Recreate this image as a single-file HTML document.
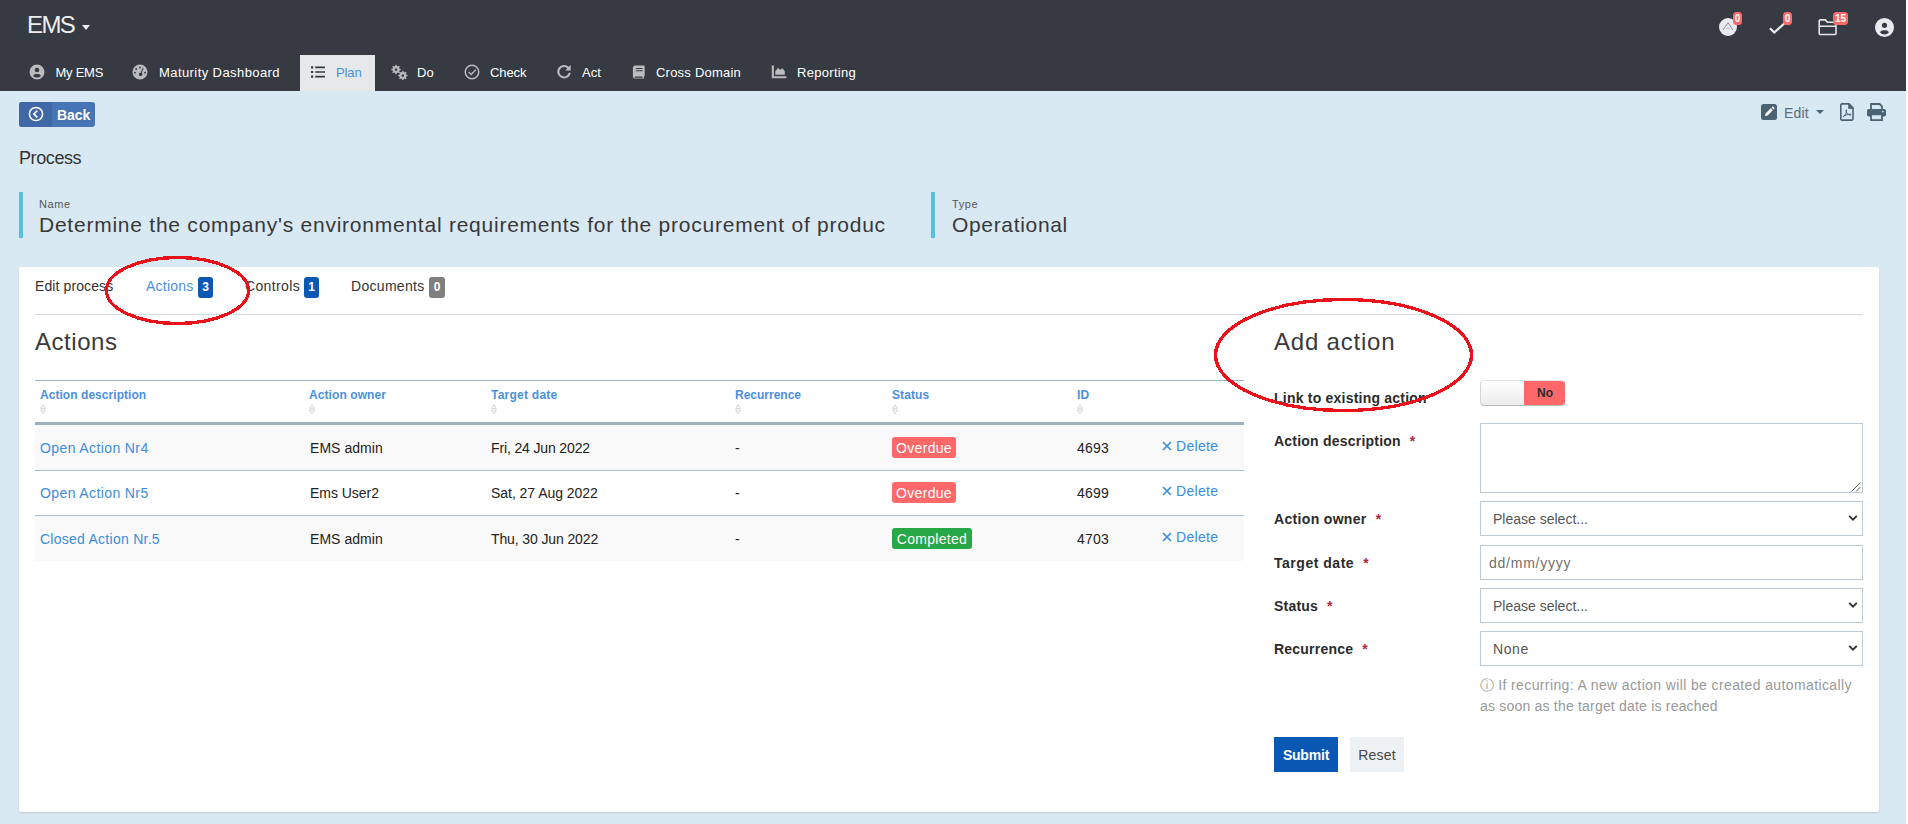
<!DOCTYPE html>
<html lang="en">
<head>
<meta charset="utf-8">
<title>EMS - Process</title>
<style>
*{box-sizing:border-box}
html,body{margin:0;padding:0}
body{width:1908px;height:824px;overflow:hidden;background:#fff;font-family:"Liberation Sans","DejaVu Sans",sans-serif;font-size:14px;color:#333;position:relative}
#page{position:absolute;left:0;top:0;width:1906px;height:824px;background:#d9e9f4;overflow:hidden}
.abs{position:absolute}
/* header */
#hdr{position:absolute;left:0;top:0;width:1906px;height:91px;background:#353a43}
#brand{position:absolute;left:27px;top:10px;font-size:24px;line-height:30px;color:#eceeef;letter-spacing:-1.6px;white-space:nowrap}
#brand-caret{position:absolute;left:82px;top:25px;width:0;height:0;border-left:4.5px solid transparent;border-right:4.5px solid transparent;border-top:5px solid #eceeef}
.nav{position:absolute;top:55px;height:36px;white-space:nowrap;font-size:13px;line-height:35px;color:#fff}
.nav svg{position:absolute;top:9px;left:0;width:16px;height:16px;fill:#b9bbbd}
.nav span{position:absolute;top:0;}
#nav-plan{background:#e6e7e8;left:300px;width:75px;color:#4a90d9}
#nav-plan svg{fill:#353a43}
/* top right */
.tbadge{position:absolute;top:12px;height:13px;border-radius:3.5px;background:#ff6868;color:#fff;font-weight:700;font-size:10px;line-height:14px;text-align:center}
/* back */
#back{position:absolute;left:19px;top:102px;width:76px;height:25px;border-radius:3px;background:#4774b4;overflow:hidden;color:#fff;font-weight:700;font-size:14px;line-height:25px}
#back i{position:absolute;left:0;top:0;width:33px;height:25px;background:#4168a6}
#back span{position:absolute;left:38px;top:1px;letter-spacing:-.1px}
#back svg{position:absolute;left:8.500px;top:4px;width:16px;height:16px}
#ptitle{position:absolute;left:19px;top:145px;font-size:18px;line-height:26px;color:#333;letter-spacing:-.4px}
.fld{position:absolute;top:192px;height:46px;border-left:4px solid #5bc0de;padding-left:16px;white-space:nowrap}
.fld small{position:absolute;left:16px;top:5px;font-size:11px;line-height:14px;color:#555;letter-spacing:.6px}
.fld b{position:absolute;left:16px;top:19px;font-weight:400;font-size:21px;line-height:28px;color:#383838;letter-spacing:.76px}
/* card */
#card{position:absolute;left:19px;top:267px;width:1860px;height:545px;background:#fff;border-radius:2px;box-shadow:0 1px 2px rgba(0,0,0,.12)}
.tab{position:absolute;top:276px;line-height:21px;font-size:14px;color:#333;white-space:nowrap}
.bdg{position:absolute;top:277px;width:15px;height:21px;border-radius:3px;background:#0a58b4;color:#fff;font-size:12px;font-weight:700;line-height:21px;text-align:center}
.hr{position:absolute;height:1px;background:#d5d9dc}
h2{position:absolute;margin:0;font-weight:400;font-size:24px;line-height:32px;color:#3a3a3a;white-space:nowrap}
/* table */
#tbl{position:absolute;left:35px;top:380px;width:1209px}
.th{position:absolute;top:388px;font-size:12px;line-height:14px;font-weight:700;color:#4a90e2;white-space:nowrap}
.srt{position:absolute;top:404px;width:6px;height:10px}
.row{position:absolute;left:35px;width:1209px;height:45px}
.row div{position:absolute;top:0;line-height:45px;white-space:nowrap;letter-spacing:.3px;color:#222}
.row a{color:#3b8de0;text-decoration:none}
.st{position:absolute;top:12px;height:21px;border-radius:3px;color:#fff;font-size:14px;line-height:22px;text-align:center;letter-spacing:.3px}
/* form */
.lbl{position:absolute;left:1274px;font-weight:700;font-size:14px;line-height:20px;color:#2b2b2b;white-space:nowrap;letter-spacing:.22px}
.lbl em{font-style:normal;color:#b0273f;margin-left:9px}
.inp{position:absolute;left:1480px;width:383px;height:35px;border:1px solid #bccbd6;background:#fff;font-size:14px;line-height:33px;color:#555;padding-left:12px;letter-spacing:0;white-space:nowrap}
.inp svg{position:absolute;right:4px;top:12px;width:10px;height:8px}
.btn{position:absolute;top:737px;height:35px;line-height:36px;text-align:center;font-size:14px}
</style>
</head>
<body>
<div id="page">

<!-- HEADER -->
<div id="hdr">
  <div id="brand">EMS</div><div id="brand-caret"></div>

  <!-- nav -->
  <div class="nav" style="left:30px;width:90px">
    <svg viewBox="0 0 16 16" style="left:-.7px;top:8.6px"><path fill-rule="evenodd" d="M8 .5a7.5 7.5 0 1 0 0 15a7.5 7.5 0 0 0 0-15zM8 3.7a2.3 2.3 0 1 1 0 4.6a2.3 2.3 0 0 1 0-4.6zM8 13.6a5.2 5.2 0 0 1-3.8-1.700c.4-1.200 1.600-1.900 2.700-1.900h2.200c1.100 0 2.300.7 2.700 1.900A5.200 5.200 0 0 1 8 13.600z"/></svg>
    <span style="left:25.5px;letter-spacing:-.25px">My EMS</span>
  </div>
  <div class="nav" style="left:133px;width:160px">
    <svg viewBox="0 0 16 16" style="left:-.7px;top:8.6px"><path fill-rule="evenodd" d="M8 .5a7.500 7.500 0 1 0 0 15a7.500 7.500 0 0 0 0-15zM8 2.600a.9.900 0 1 1 0 1.800a.9.900 0 0 1 0-1.800zM4.200 4.100a.9.900 0 1 1 0 1.800a.9.900 0 0 1 0-1.800zM3 7.800a.9.900 0 1 1 0 1.800a.9.900 0 0 1 0-1.800zM13 7.800a.9.900 0 1 1 0 1.800a.9.900 0 0 1 0-1.800zM10.700 3.700l.900.400l-1.900 5a1.700 1.700 0 1 1-1-.400z"/></svg>
    <span style="left:26px;letter-spacing:.42px">Maturity Dashboard</span>
  </div>
  <div class="nav" id="nav-plan">
    <svg viewBox="0 0 16 16" style="left:10px"><path d="M1 2.300h2.200v2.200H1zM1 6.900h2.200v2.200H1zM1 11.500h2.200v2.200H1zM5.200 2.600H15v1.600H5.200zM5.200 7.200H15v1.600H5.200zM5.200 11.800H15v1.600H5.200z"/></svg>
    <span style="left:36px;letter-spacing:-.1px">Plan</span>
  </div>
  <div class="nav" style="left:390px;width:60px">
    <svg viewBox="0 0 18 16" style="width:18px"><g fill-rule="evenodd"><path d="M5.500 .8l1.100 0l.3 1.300l1 .4l1.100-.7l.8.800l-.7 1.100l.4 1l1.300.3v1.100l-1.300.3l-.4 1l.7 1.100l-.8.800l-1.100-.7l-1 .4l-.3 1.300H5.500l-.3-1.300l-1-.4l-1.100.7l-.8-.8l.7-1.100l-.4-1L1.300 6.100V5l1.300-.3l.4-1l-.7-1.100l.8-.8l1.100.7l1-.4zM6 4.300a1.300 1.300 0 1 0 .01 0z"/><path d="M12.300 6.800l1.100 0l.3 1.300l1 .4l1.100-.7l.8.800l-.7 1.100l.4 1l1.300.3v1.100l-1.300.3l-.4 1l.7 1.100l-.8.800l-1.100-.7l-1 .4l-.3 1.300h-1.100l-.3-1.300l-1-.4l-1.100.7l-.8-.8l.7-1.100l-.4-1l-1.300-.3V11l1.300-.3l.4-1l-.7-1.100l.8-.8l1.100.7l1-.4zM12.800 10.300a1.300 1.300 0 1 0 .01 0z"/></g></svg>
    <span style="left:27px;letter-spacing:.2px">Do</span>
  </div>
  <div class="nav" style="left:464px;width:80px">
    <svg viewBox="0 0 16 16"><path fill-rule="evenodd" d="M8 .5a7.500 7.500 0 1 0 0 15a7.500 7.500 0 0 0 0-15zM8 2a6 6 0 1 1 0 12a6 6 0 0 1 0-12zM11.300 5.300l1 1l-5.100 5.100l-3-3l1-1l2 2z"/></svg>
    <span style="left:26px;letter-spacing:-.1px">Check</span>
  </div>
  <div class="nav" style="left:556px;width:60px">
    <svg viewBox="0 0 16 16"><path d="M14.700 .9v5.600H9.100l2.200-2.200A4.700 4.700 0 1 0 12.700 8.800h2.100A6.800 6.800 0 1 1 12.800 2.800z"/></svg>
    <span style="left:26px">Act</span>
  </div>
  <div class="nav" style="left:631px;width:125px">
    <svg viewBox="0 0 16 16" style="width:14px;left:1px"><path fill-rule="evenodd" d="M3.500 .5h10a1 1 0 0 1 1 1v10.500a1 1 0 0 1-1 1v1.500h.5v1H3.500A2.500 2.500 0 0 1 1 13V3A2.500 2.500 0 0 1 3.500 .5zM4.500 3.500v1.200h7.500V3.500zM4.500 6v1.200h7.500V6zM3.700 13a.75.750 0 0 0 0 1.500h8.300V13z"/></svg>
    <span style="left:25px;letter-spacing:.22px">Cross Domain</span>
  </div>
  <div class="nav" style="left:771px;width:100px">
    <svg viewBox="0 0 16 16"><path d="M.8 1.500h2.100v10.700H15.400v2.100H.8zM4.300 10.800V7.200l2.600-3.200l2.400 1.800l2.100-1.600l2.400 3v3.600z"/></svg>
    <span style="left:26px;letter-spacing:.3px">Reporting</span>
  </div>

  <!-- top right icons -->
  <svg class="abs" style="left:1719px;top:18px" width="18" height="18" viewBox="0 0 18 18"><circle cx="9" cy="9" r="9" fill="#e9ecef"/><path d="M3.900 12L9.200 4.700L13.800 12" fill="none" stroke="#8d9399" stroke-width="1"/><path d="M7 10.300h4" stroke="#c4c7ca" stroke-width="1.200"/></svg>
  <div class="tbadge" style="left:1733px;width:9px">0</div>
  <svg class="abs" style="left:1769px;top:22px" width="17" height="12" viewBox="0 0 17 12"><path d="M1 6.200l4.300 4.300L15.800 1" fill="none" stroke="#e9ecef" stroke-width="2.200"/></svg>
  <div class="tbadge" style="left:1783px;width:9px">0</div>
  <svg class="abs" style="left:1818px;top:18px" width="20" height="18" viewBox="0 0 20 18"><path d="M2.200 1.900h5.100l2.200 2.400H17a1 1 0 0 1 1 1v10.200a1 1 0 0 1-1 1H2.200a1 1 0 0 1-1-1V2.900a1 1 0 0 1 1-1zM1.500 8.200h16.500" fill="none" stroke="#e4e7ea" stroke-width="1.600"/></svg>
  <div class="tbadge" style="left:1833px;width:15px">15</div>
  <svg class="abs" style="left:1875px;top:18px" width="19" height="19" viewBox="0 0 16 16"><path fill="#e9ecef" fill-rule="evenodd" d="M8 0a8 8 0 1 0 0 16a8 8 0 0 0 0-16zM8 4a2.200 2.200 0 1 1 0 4.400a2.200 2.200 0 0 1 0-4.400zM8 13.800a5 5 0 0 1-3.700-1.600c.4-1.200 1.500-1.900 2.600-1.900h2.200c1.100 0 2.200.7 2.600 1.900A5 5 0 0 1 8 13.800z"/></svg>
</div>

<!-- TOOLBAR -->
<div id="back"><i></i><svg viewBox="0 0 16 16"><circle cx="8" cy="8" r="6.600" fill="none" stroke="#fff" stroke-width="1.500"/><path d="M9.300 4.600L5.900 8l3.400 3.400" fill="none" stroke="#fff" stroke-width="1.700"/></svg><span>Back</span></div>

<svg class="abs" style="left:1761px;top:104px" width="16" height="16" viewBox="0 0 16 16"><rect x="0" y="0" width="16" height="16" rx="2.500" fill="#4b6273"/><path d="M4 12l.6-2.600l5.200-5.200l2 2l-5.200 5.200zM10.500 3.500l.8-.8a.8.800 0 0 1 1.100 0l.9.900a.8.800 0 0 1 0 1.100l-.8.800z" fill="#fff"/></svg>
<div class="abs" style="left:1784px;top:103px;line-height:21px;color:#5b6b77;letter-spacing:.2px">Edit</div>
<div class="abs" style="left:1816px;top:110px;width:0;height:0;border-left:4px solid transparent;border-right:4px solid transparent;border-top:4.500px solid #4b6273"></div>
<svg class="abs" style="left:1840px;top:103px" width="14" height="18" viewBox="0 0 14 18"><path d="M1.800 .9h7.200l4 4v11.200a1 1 0 0 1-1 1H1.800a1 1 0 0 1-1-1V1.900a1 1 0 0 1 1-1z" fill="none" stroke="#4b6273" stroke-width="1.600"/><path d="M8.600 .9v4.500h4.500z" fill="#4b6273" stroke="#4b6273" stroke-width=".8"/><path d="M3.200 13.600c1.800-1 3.200-3.300 3.500-6.100c.1-.9-.9-.9-.8 0c.3 2.600 2.200 4.400 4.600 4.600c.9 0 .8-.9 0-.9c-2.500 0-5.300 1-7.200 2.300c-.6.500-.6.400-.1.100z" fill="none" stroke="#4b6273" stroke-width="1"/></svg>
<svg class="abs" style="left:1867px;top:103px" width="19" height="18" viewBox="0 0 19 18"><path d="M4 6V1h8.600l2.400 2.400V6" fill="none" stroke="#4b6273" stroke-width="1.800"/><rect x="0" y="6" width="19" height="7.500" rx="1.800" fill="#4b6273"/><rect x="4" y="11.300" width="11" height="5.800" fill="#d9e9f4" stroke="#4b6273" stroke-width="1.800"/><circle cx="15.800" cy="8.600" r=".9" fill="#d9e9f4"/></svg>

<div id="ptitle">Process</div>

<div class="fld" style="left:19px;width:890px"><small>Name</small><b>Determine the company's environmental requirements for the procurement of produc</b></div>
<div class="fld" style="left:931px;width:300px"><small style="left:17px">Type</small><b style="left:17px;letter-spacing:.67px">Operational</b></div>

<!-- CARD -->
<div id="card"></div>

<div class="tab" style="left:35px;letter-spacing:.1px">Edit process</div>
<div class="tab" style="left:146px;color:#4a90e2;letter-spacing:.22px">Actions</div><div class="bdg" style="left:198px">3</div>
<div class="tab" style="left:245px;letter-spacing:.36px">Controls</div><div class="bdg" style="left:304px">1</div>
<div class="tab" style="left:351px;letter-spacing:.3px">Documents</div><div class="bdg" style="left:429px;width:16px;background:#7f7f7f">0</div>

<div class="hr" style="left:35px;top:314px;width:1209px"></div>
<div class="hr" style="left:1274px;top:314px;width:589px"></div>

<h2 style="left:35px;top:326px;letter-spacing:.53px">Actions</h2>
<h2 style="left:1274px;top:326px;letter-spacing:.8px">Add action</h2>

<!-- TABLE -->
<div class="hr" style="left:35px;top:380px;width:1209px;background:#9db1c1"></div>
<div class="th" style="left:40px;letter-spacing:.05px">Action description</div><svg class="srt" style="left:40px" viewBox="0 0 6 10"><path d="M.6 4.400L3 .9L5.400 4.400zM.6 6.100L3 9.600L5.400 6.100z" fill="none" stroke="#b4babf" stroke-width=".6"/></svg>
<div class="th" style="left:309px;letter-spacing:.08px">Action owner</div><svg class="srt" style="left:309px" viewBox="0 0 6 10"><path d="M.6 4.400L3 .9L5.400 4.400zM.6 6.100L3 9.600L5.400 6.100z" fill="none" stroke="#b4babf" stroke-width=".6"/></svg>
<div class="th" style="left:491px;letter-spacing:.25px">Target date</div><svg class="srt" style="left:491px" viewBox="0 0 6 10"><path d="M.6 4.400L3 .9L5.400 4.400zM.6 6.100L3 9.600L5.400 6.100z" fill="none" stroke="#b4babf" stroke-width=".6"/></svg>
<div class="th" style="left:735px;letter-spacing:0">Recurrence</div><svg class="srt" style="left:735px" viewBox="0 0 6 10"><path d="M.6 4.400L3 .9L5.400 4.400zM.6 6.100L3 9.600L5.400 6.100z" fill="none" stroke="#b4babf" stroke-width=".6"/></svg>
<div class="th" style="left:892px;letter-spacing:.1px">Status</div><svg class="srt" style="left:892px" viewBox="0 0 6 10"><path d="M.6 4.400L3 .9L5.400 4.400zM.6 6.100L3 9.600L5.400 6.100z" fill="none" stroke="#b4babf" stroke-width=".6"/></svg>
<div class="th" style="left:1077px;letter-spacing:.1px">ID</div><svg class="srt" style="left:1077px" viewBox="0 0 6 10"><path d="M.6 4.400L3 .9L5.400 4.400zM.6 6.100L3 9.600L5.400 6.100z" fill="none" stroke="#b4babf" stroke-width=".6"/></svg>
<div class="hr" style="left:35px;top:422px;width:1209px;height:3px;background:#9fb0be"></div>
<div class="row" style="top:425px;height:45px;background:#f9f9f9;">
  <div style="left:5px;top:1px;letter-spacing:.39px"><a>Open Action Nr4</a></div><div style="left:275px;top:1px;letter-spacing:.04px">EMS admin</div><div style="left:456px;top:1px;letter-spacing:-.14px">Fri, 24 Jun 2022</div><div style="left:700px;top:1px">-</div>
  <span class="st" style="left:857px;top:12px;width:64px;background:#ff6868">Overdue</span><div style="left:1042px;top:1px;letter-spacing:.2px">4693</div>
  <div style="left:1127px;top:-1px"><a><svg width="10" height="10" viewBox="0 0 10 10" style="margin-right:4px"><path d="M1 1l8 8M9 1l-8 8" stroke="#3b8de0" stroke-width="1.700" fill="none"/></svg>Delete</a></div>
</div>
<div class="row" style="top:470px;height:46px;background:#fff;border-top:1px solid #a9bbc9;">
  <div style="left:5px;top:0px;letter-spacing:.39px"><a>Open Action Nr5</a></div><div style="left:275px;top:0px;letter-spacing:-.04px">Ems User2</div><div style="left:456px;top:0px;letter-spacing:-.04px">Sat, 27 Aug 2022</div><div style="left:700px;top:0px">-</div>
  <span class="st" style="left:857px;top:11px;width:64px;background:#ff6868">Overdue</span><div style="left:1042px;top:0px;letter-spacing:.2px">4699</div>
  <div style="left:1127px;top:-2px"><a><svg width="10" height="10" viewBox="0 0 10 10" style="margin-right:4px"><path d="M1 1l8 8M9 1l-8 8" stroke="#3b8de0" stroke-width="1.700" fill="none"/></svg>Delete</a></div>
</div>
<div class="row" style="top:515px;height:46px;background:#f9f9f9;border-top:1px solid #a9bbc9;">
  <div style="left:5px;top:1px;letter-spacing:.26px"><a>Closed Action Nr.5</a></div><div style="left:275px;top:1px;letter-spacing:.04px">EMS admin</div><div style="left:456px;top:1px;letter-spacing:-.12px">Thu, 30 Jun 2022</div><div style="left:700px;top:1px">-</div>
  <span class="st" style="left:857px;top:12px;width:80px;background:#27a745">Completed</span><div style="left:1042px;top:1px;letter-spacing:.2px">4703</div>
  <div style="left:1127px;top:-1px"><a><svg width="10" height="10" viewBox="0 0 10 10" style="margin-right:4px"><path d="M1 1l8 8M9 1l-8 8" stroke="#3b8de0" stroke-width="1.700" fill="none"/></svg>Delete</a></div>
</div>

<!-- FORM -->
<div class="lbl" style="top:388px">Link to existing action</div>
<div class="abs" style="left:1480px;top:380px;width:85px;height:26px;border:1px solid #ccc;border-color:#e4e4e4 #ff6868 #bbb #d4d4d4;border-radius:4px;background:linear-gradient(#fff,#ececec);overflow:hidden"><div class="abs" style="left:43px;top:-1px;width:42px;height:26px;background:#ff6868;color:#2b2b2b;font-weight:700;font-size:12px;line-height:26px;text-align:center">No</div></div>
<div class="lbl" style="top:431px">Action description<em>*</em></div>
<div class="inp" style="top:423px;height:70px"><svg viewBox="0 0 10 10" style="right:1px;top:58px;width:10px;height:10px"><path d="M9.500 .5l-9 9M9.500 5l-4.500 4.500" stroke="#555" stroke-width="1" fill="none"/></svg></div>
<div class="lbl" style="top:509px;letter-spacing:.33px">Action owner<em>*</em></div>
<div class="inp" style="top:501px;line-height:35px">Please select...<svg viewBox="0 0 10 8"><path d="M1.200 1.800L5 5.600l3.800-3.800" fill="none" stroke="#333" stroke-width="1.900"/></svg></div>
<div class="lbl" style="top:553px;letter-spacing:.52px">Target date<em>*</em></div>
<div class="inp" style="top:545px;padding-left:8px;color:#6f6f6f;letter-spacing:.76px;line-height:35px">dd/mm/yyyy</div>
<div class="lbl" style="top:596px">Status<em>*</em></div>
<div class="inp" style="top:588px;line-height:35px">Please select...<svg viewBox="0 0 10 8"><path d="M1.200 1.800L5 5.600l3.800-3.800" fill="none" stroke="#333" stroke-width="1.900"/></svg></div>
<div class="lbl" style="top:639px">Recurrence<em>*</em></div>
<div class="inp" style="top:631px;line-height:35px;letter-spacing:.6px">None<svg viewBox="0 0 10 8"><path d="M1.200 1.800L5 5.600l3.800-3.800" fill="none" stroke="#333" stroke-width="1.900"/></svg></div>
<div class="abs" style="left:1480px;top:675px;width:390px;line-height:21px;color:#999;letter-spacing:.38px;white-space:nowrap"><span style="font-family:'DejaVu Sans',sans-serif;font-size:14px;letter-spacing:0">&#9432;</span> If recurring: A new action will be created automatically<br><span style="letter-spacing:.2px">as soon as the target date is reached</span></div>
<div class="btn" style="left:1274px;width:64px;background:#0a58b4;color:#fff;font-weight:700;letter-spacing:-.2px">Submit</div>
<div class="btn" style="left:1350px;width:54px;background:#eef1f4;color:#444;letter-spacing:.2px">Reset</div>

<!-- ANNOTATIONS -->
<svg class="abs" style="left:0;top:0;pointer-events:none" width="1906" height="824" viewBox="0 0 1906 824" shape-rendering="crispEdges"><ellipse cx="177.5" cy="290.5" rx="71" ry="33" fill="none" stroke="#eb111a" stroke-width="3.3"/><ellipse cx="1343.5" cy="355" rx="128" ry="55.5" fill="none" stroke="#eb111a" stroke-width="3.3"/></svg>

</div>
</body>
</html>
